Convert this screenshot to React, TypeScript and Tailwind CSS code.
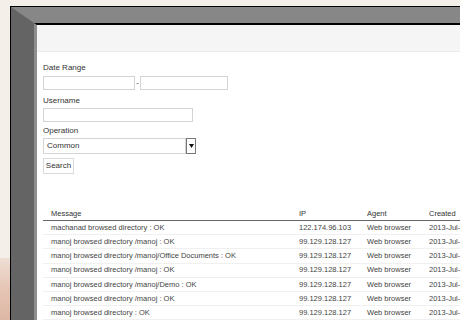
import React from "react";

const rows = [
  ["machanad browsed directory : OK", "122.174.96.103"],
  ["manoj browsed directory /manoj : OK", "99.129.128.127"],
  ["manoj browsed directory /manoj/Office Documents : OK", "99.129.128.127"],
  ["manoj browsed directory /manoj : OK", "99.129.128.127"],
  ["manoj browsed directory /manoj/Demo : OK", "99.129.128.127"],
  ["manoj browsed directory /manoj : OK", "99.129.128.127"],
  ["manoj browsed directory : OK", "99.129.128.127"],
];

export default function App() {
  return (
    <div
      className="flex h-[320px] w-[460px] overflow-hidden bg-[#f4efe9] text-[#333]"
      style={{ fontFamily: '"Liberation Sans", Arial, sans-serif' }}
    >
      {/* wall behind the monitor */}
      <div className="flex w-[10px] shrink-0 flex-col">
        <div className="h-[258px] bg-[#f4efe9]" />
        <div className="flex-1 bg-gradient-to-b from-[#eedfd4] via-[#e6c5b5] to-[#ddb7a5]" />
      </div>

      {/* monitor */}
      <div className="mt-[6px] flex min-h-0 flex-1 border-l border-t border-black">
        <div className="flex min-h-0 flex-1 border-l-[23px] border-t-[16px] border-l-[#646464] border-t-[#878787]">
          <div className="flex min-h-0 flex-1 border-l-[3px] border-t-[2px] border-l-[#8e8e8e] border-t-black">
            {/* screen */}
            <div className="flex min-h-0 flex-1 flex-col overflow-hidden bg-white">
              <div className="h-[27px] shrink-0 border-b border-[#ececec] bg-[#f5f5f5]" />

              <div className="flex shrink-0 flex-col pl-[6px] text-[8px] leading-none">
                <div className="mt-[12px] h-[10px]">Date Range</div>
                <div className="mt-[2px] flex items-center">
                  <div className="h-[14px] w-[92px] border border-[#d4d4d4]" />
                  <span className="w-[5px] text-center">-</span>
                  <div className="h-[14px] w-[88px] border border-[#d4d4d4]" />
                </div>

                <div className="mt-[7px] h-[10px]">Username</div>
                <div className="mt-[1px] h-[14px] w-[150px] border border-[#d4d4d4]" />

                <div className="mt-[5px] h-[10px]">Operation</div>
                <div className="mt-[1px] flex h-[16px] items-stretch">
                  <div className="flex w-[143px] items-center border border-[#d4d4d4] pl-[3px]">Common</div>
                  <div className="flex w-[10px] items-center justify-center border border-[#777] bg-white">
                    <svg width="5" height="4" viewBox="0 0 5 4">
                      <path d="M0 0h5L2.5 4z" fill="#111" />
                    </svg>
                  </div>
                </div>

                <div className="mt-[4px] flex h-[16px] w-[31px] items-center justify-center border border-[#dadada]">
                  Search
                </div>
              </div>

              {/* table */}
              <div className="ml-[6px] mt-[34px] flex shrink-0 flex-col text-[7.5px] leading-none">
                <div className="flex h-[13px] items-center border-b-[1.5px] border-[#666]">
                  <div className="w-[248px] pl-[8px]">Message</div>
                  <div className="w-[68px] pl-[8px]">IP</div>
                  <div className="w-[62px] pl-[8px]">Agent</div>
                  <div className="whitespace-nowrap pl-[8px]">Created</div>
                </div>
                {rows.map(([msg, ip], i) => (
                  <div key={i} className="flex h-[14.2px] shrink-0 items-center border-b border-[#f0f0f0] text-[#444]">
                    <div className="w-[248px] whitespace-nowrap pl-[8px]">{msg}</div>
                    <div className="w-[68px] whitespace-nowrap pl-[8px]">{ip}</div>
                    <div className="w-[62px] whitespace-nowrap pl-[8px]">Web browser</div>
                    <div className="whitespace-nowrap pl-[8px]">2013-Jul-</div>
                  </div>
                ))}
              </div>
            </div>
          </div>
        </div>
      </div>
    </div>
  );
}
